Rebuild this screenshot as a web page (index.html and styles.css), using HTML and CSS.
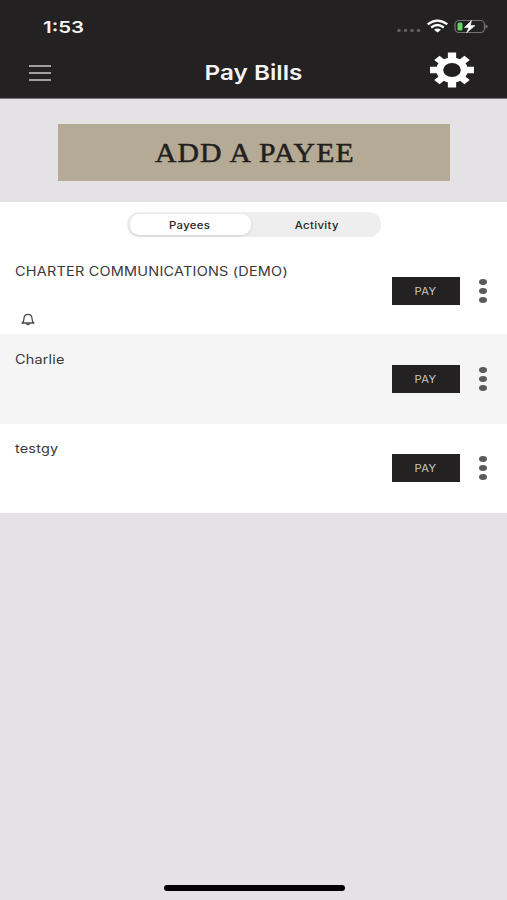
FILE: index.html
```html
<!DOCTYPE html>
<html lang="en">
<head>
<meta charset="utf-8">
<title>Pay Bills</title>
<link rel="stylesheet" href="styles.css">
</head>
<body>
<div class="app">
  <header class="header">
    <div class="status">
      <span class="time">1:53</span>
      <svg class="status-icons" width="94" height="20" viewBox="0 0 94 20">
        <g fill="#605e5f"><circle cx="5" cy="13.500" r="1.800"/><circle cx="11.500" cy="13.500" r="1.800"/><circle cx="18" cy="13.500" r="1.800"/><circle cx="24.500" cy="13.500" r="1.800"/></g>
        <g fill="none" stroke="#fff" stroke-width="2.300">
          <path d="M33.700 7.400Q43.500-.2 53.300 7.400"/>
          <path d="M37.200 10.500Q43.500 5.600 49.800 10.500"/>
        </g>
        <path d="M40 12.800Q43.500 10.300 47 12.800L43.500 15.500Z" fill="#fff"/>
        <rect x="61" y="3.500" width="29.500" height="12" rx="4" fill="none" stroke="#747273" stroke-width="1.200"/>
        <path d="M91.500 7.500Q93.700 8 93.700 9.500T91.500 11.500Z" fill="#747273"/>
        <rect x="63.500" y="5.500" width="5" height="8" rx="1.500" fill="#65d467"/>
        <path d="M77.500 3.500L70.500 10.600H75L72.500 15.800L81 8.600H76.300Z" fill="#fff" stroke="#fff" stroke-width=".6"/>
      </svg>
    </div>
    <div class="nav">
      <div class="menu"><i></i><i></i><i></i></div>
      <h1 class="title">Pay Bills</h1>
      <svg class="gear" width="46" height="36" viewBox="-23 -18 46 36">
        <g transform="scale(1.255 1)" fill="#fff">
          <path d="M-3.300-17.500H3.300V17.500H-3.300ZM-17.500-3.300V3.300H17.500V-3.300Z"/>
          <path transform="rotate(45)" d="M-3-17H3V17H-3ZM-17-3V3H17V-3Z"/>
          <circle r="12.600"/>
          <circle r="7" fill="#231f20"/>
        </g>
      </svg>
    </div>
  </header>
  <section class="add"><button class="add-btn"><span>ADD A PAYEE</span></button></section>
  <main class="list">
    <div class="tabs">
      <div class="seg">
        <div class="tab active"><span>Payees</span></div>
        <div class="tab"><span>Activity</span></div>
      </div>
    </div>
    <div class="row first">
      <div class="info">
        <span class="name">CHARTER COMMUNICATIONS (DEMO)</span>
        <svg class="bell" width="14" height="13" viewBox="0 0 14 13" fill="none" stroke="#4c4a4b" stroke-width="1.300" stroke-linejoin="round">
          <path d="M1 10Q3 8.800 3 5.500Q3 1.300 7 1.300T11 5.500Q11 8.800 13 10Z"/><path d="M5.300 10.400Q7 13 8.700 10.400"/>
        </svg>
      </div>
      <button class="pay"><span>PAY</span></button>
      <div class="more"><i></i><i></i><i></i></div>
    </div>
    <div class="row alt">
      <div class="info"><span class="name short">Charlie</span></div>
      <button class="pay"><span>PAY</span></button>
      <div class="more"><i></i><i></i><i></i></div>
    </div>
    <div class="row last">
      <div class="info"><span class="name short">testgy</span></div>
      <button class="pay"><span>PAY</span></button>
      <div class="more"><i></i><i></i><i></i></div>
    </div>
  </main>
  <footer class="footer"><div class="home"></div></footer>
</div>
</body>
</html>
```
FILE: styles.css
```css
* { box-sizing: border-box; }
body { margin: 0; font-family: Inter, "Liberation Sans", sans-serif; color: #3a3839; background: #e4e2e5; }
button { border: 0; padding: 0; margin: 0; font: inherit; }
.app { width: 507px; height: 900px; display: flex; flex-direction: column; }
.header { height: 99px; background: #232122; border-bottom: 1px solid #777476; color: #fff; }
.status { height: 48px; padding: 17px 19px 0 43px; display: flex; justify-content: space-between; }
.time { font-size: 16.5px; line-height: 20px; font-weight: 600; color: #f4f2f3; transform: scaleX(1.24); transform-origin: left; }
.status-icons { display: block; }
.nav { height: 50px; display: grid; grid-template-columns: 130px 1fr 130px; align-items: center; }
.menu { margin-left: 29px; width: 22px; display: grid; gap: 5px; }
.menu i { height: 2px; background: #a19fa0; }
.title { margin: 0; text-align: center; font-size: 20.5px; line-height: 26px; font-weight: 600; color: #f4f2f3; transform: scaleX(1.185); }
.gear { margin-left: 52px; margin-top: -6px; display: block; }
.add { height: 103px; padding: 25px 57px 0 58px; }
.add-btn { display: flex; align-items: center; justify-content: center; width: 392px; height: 57px; background: #b4aa96; color: #231f20; font-family: "Liberation Serif", serif; font-size: 27px; line-height: 30px; }
.add-btn span { display: block; transform: scaleX(1.1); white-space: nowrap; letter-spacing: 1px; margin-right: -1px; -webkit-text-stroke: .5px #231f20; }
.list { background: #fff; }
.tabs { height: 44px; padding-top: 10px; }
.seg { width: 254px; height: 25px; margin-left: 127px; border-radius: 12px; background: #eee; padding: 2px 3px; display: flex; }
.tab { width: 127px; padding-top: 1px; padding-left: 4px; display: flex; align-items: center; justify-content: center; font-size: 9.7px; letter-spacing: .3px; font-weight: 500; color: #272526; }
.tab.active { width: 121px; padding-left: 0; padding-right: 1px; background: #fff; border-radius: 9px; box-shadow: 0 1px 3px #0002; }
.tab span { transform: scaleX(1.17); }
.row { height: 89px; display: flex; }
.row.alt { background: #f5f5f5; height: 90px; }
.row.first { height: 88px; }
.info { width: 392px; padding: 18px 0 0 14.5px; }
.last .info { padding-top: 17px; }
.name { display: block; width: max-content; font-size: 12.5px; line-height: 16px; white-space: nowrap; letter-spacing: .2px; transform: scaleX(1.155); transform-origin: left; }
.name.short { letter-spacing: .15px; }
.bell { display: block; margin: 33px 0 0 6.5px; }
.pay { width: 68px; height: 28px; margin-top: 31px; background: #232122; color: #c9c7c8; font-size: 9.7px; display: flex; align-items: center; justify-content: center; }
.pay span { transform: scaleX(1.15); letter-spacing: .3px; margin-right: 1px; }
.more { width: 8px; margin: 33px 0 0 19px; display: flex; flex-direction: column; gap: 3px; }
.last .pay { margin-top: 30px; }
.last .more { margin-top: 32px; }
.more i { width: 8px; height: 6px; background: #5b595a; border-radius: 50%; }
.footer { margin-top: auto; height: 15px; }
.home { width: 181px; height: 6px; margin-left: 163.5px; border-radius: 3px; background: #000; }
```
